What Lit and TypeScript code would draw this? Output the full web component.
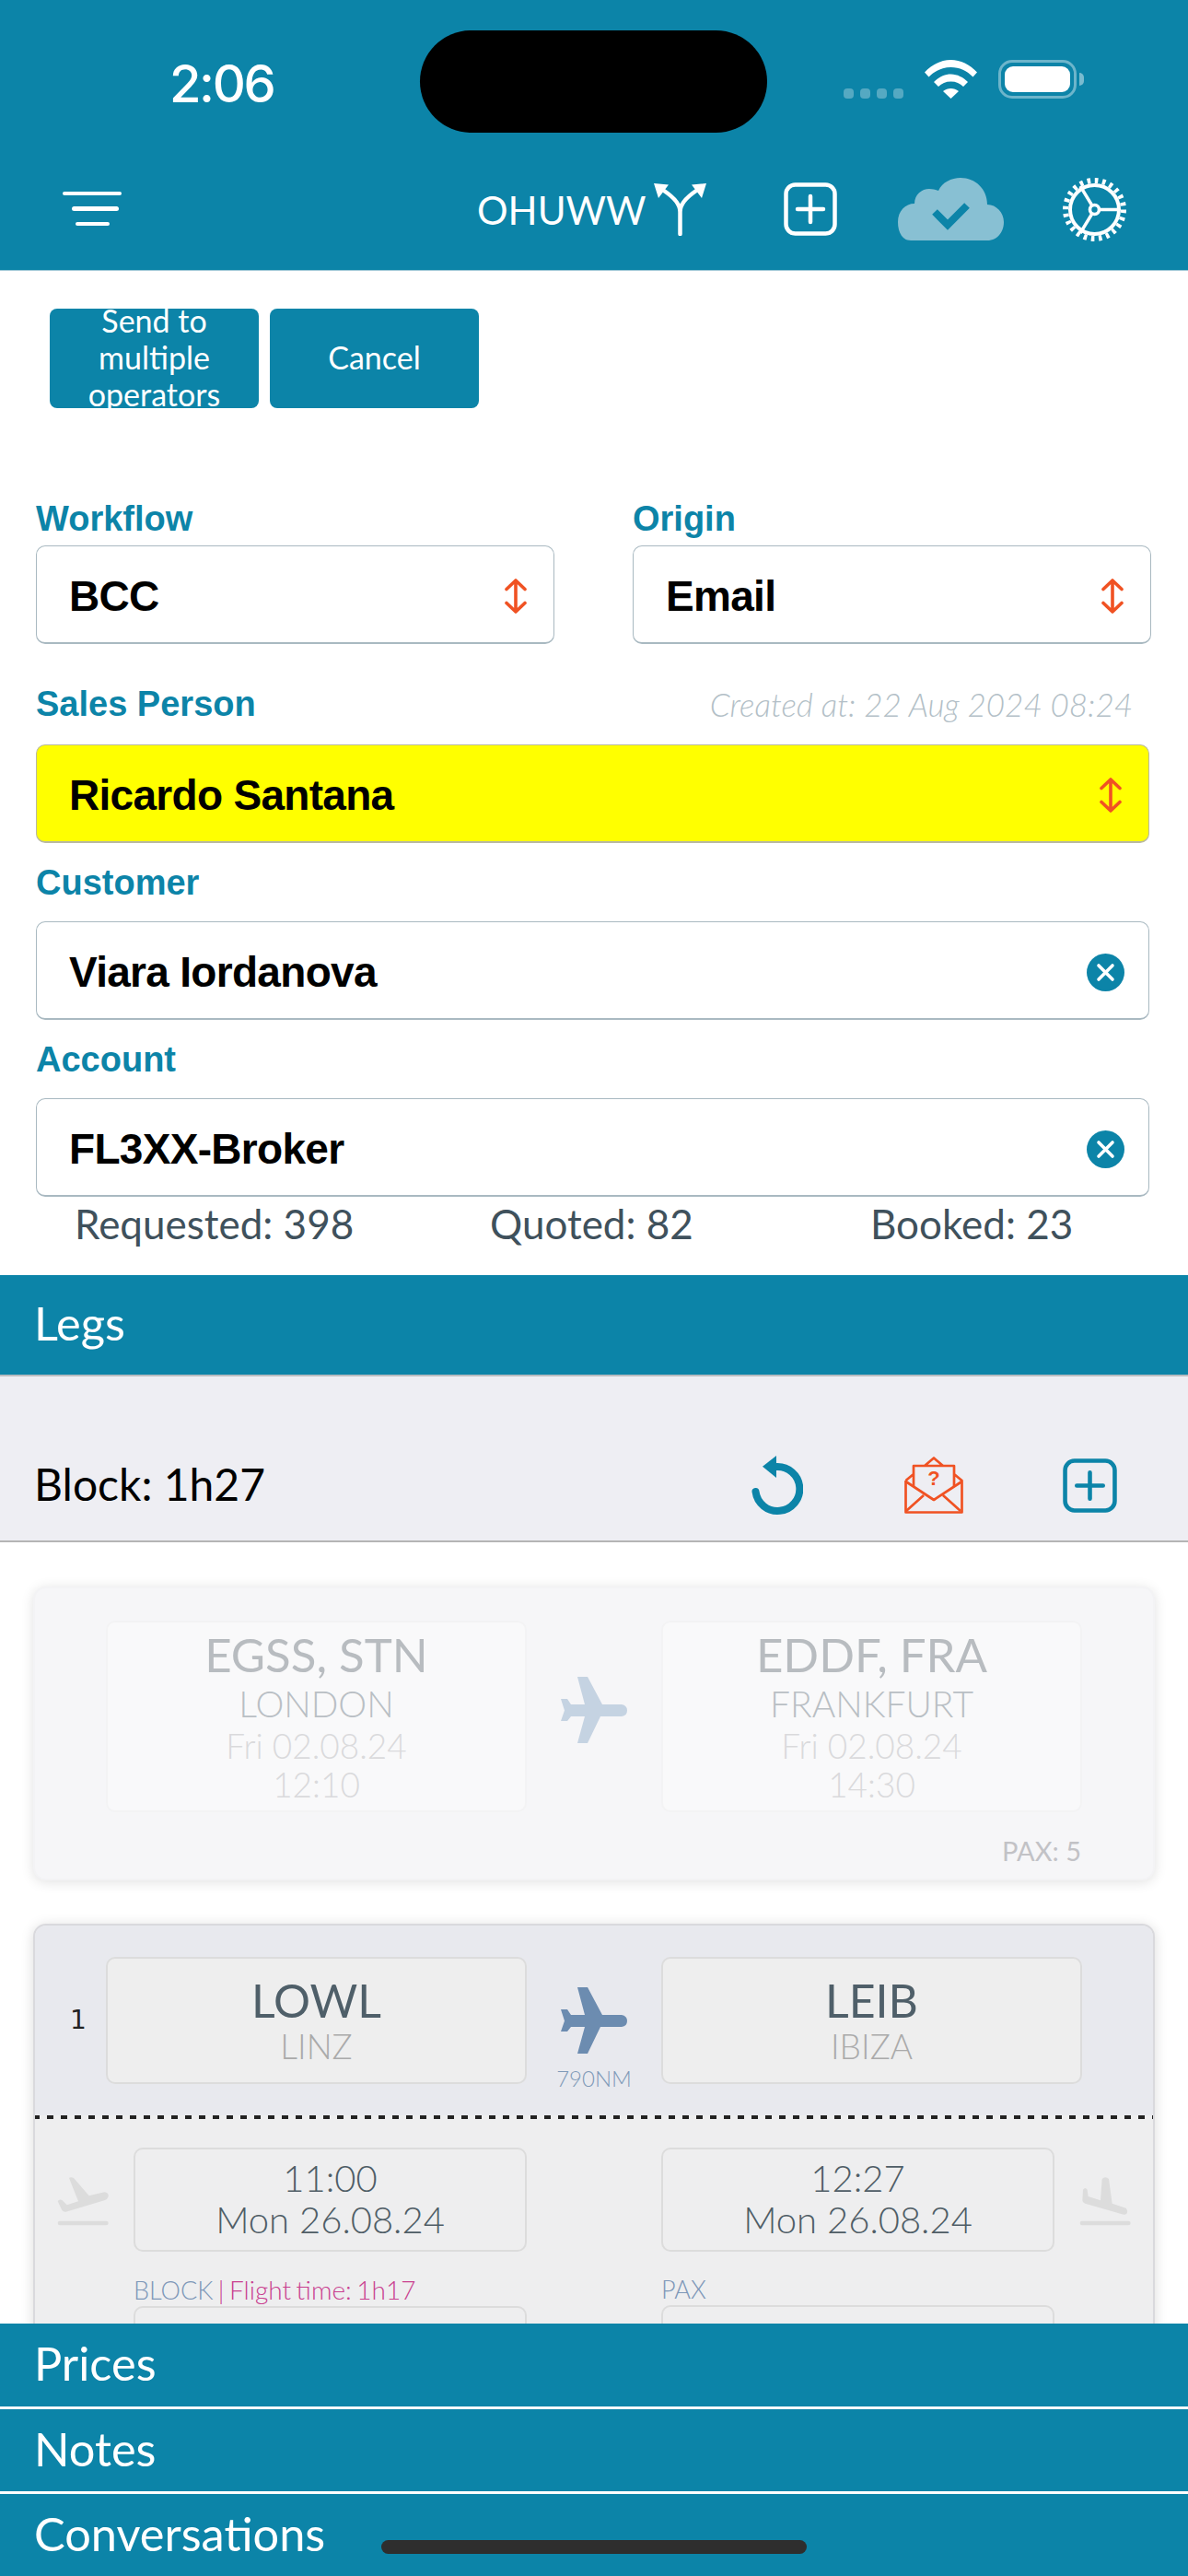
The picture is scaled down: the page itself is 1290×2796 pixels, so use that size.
import { LitElement, css, html, svg } from "lit";
import { customElement } from "lit/decorators.js";

const PLANE =
	"M18 0 L29 0 L45 30 L66 30 Q72 31 72 36.5 Q72 42 66 43 L43 43 L29 72 L18 72 L26 43 L11 43 L7 48 L0 48 L4 36.5 L0 24 L7 24 L11 30 L26 30 Z";

const plane = () => html`<svg class="plane" viewBox="0 0 72 72"><path d=${PLANE} /></svg>`;

const plusBox = () => html`
	<svg class="plus" viewBox="0 0 58 58" fill="none" stroke="currentColor">
		<rect x="2.5" y="2.5" width="53" height="53" rx="10" stroke-width="4.5" />
		<path d="M29 15v28M15 29h28" stroke-width="4.5" stroke-linecap="round" />
	</svg>
`;

const updown = html`
	<svg class="updown" viewBox="0 0 24 38" fill="none" stroke="#f05223" stroke-width="3.6" stroke-linecap="round" stroke-linejoin="round">
		<path d="M12 2v34M2 11.5 12 2l10 9.5M2 26.5 12 36l10-9.5" />
	</svg>
`;

const clear = html`
	<svg class="clear" viewBox="0 0 41 41">
		<circle cx="20.5" cy="20.5" r="20.5" fill="#0c84a8" />
		<path d="M13 13l15 15M28 13 13 28" stroke="#fff" stroke-width="3.6" stroke-linecap="round" />
	</svg>
`;

const gear = html`
	<svg class="gear" viewBox="0 0 69 69" fill="none" stroke="#fff">
		<circle cx="34.5" cy="34.5" r="26.5" stroke-width="4" />
		<circle cx="34.5" cy="34.5" r="31.5" stroke-width="6" stroke-dasharray="3.6 4.65" />
		<circle cx="34.5" cy="34.5" r="5" stroke-width="3.6" />
		<path d="M40 34.5H61M31.5 29.5 19 9M31.5 39.5 19 60" stroke-width="3.4" />
	</svg>
`;

const ground = svg`<rect x="38" y="182" width="165" height="14" rx="7" />`;

const takeoff = html`
	<svg class="ground" viewBox="0 0 240 240">
		<path d="M75 42Q80 37 90 42L140 100 190 88Q205 90 203 103 200 112 190 115L65 152Q58 154 52 147L38 118Q42 110 52 114L68 130 105 118Z" />
		${ground}
	</svg>
`;

const landing = html`
	<svg class="ground right" viewBox="0 0 240 240">
		<path d="M110 45Q120 35 132 45L143 125 188 140Q196 150 190 158 185 163 175 160L55 125Q46 122 46 115L48 80Q55 70 62 80L65 102 105 115Z" />
		${ground}
	</svg>
`;

@customElement("app-root")
export class AppRoot extends LitElement {
	static styles = css`
		:host {
			display: flex;
			flex-direction: column;
			position: relative;
			width: 1290px;
			height: 2796px;
			overflow: hidden;
			background: #fff;
			font-family: "Lato", "Open Sans", sans-serif;
			color: #000;
		}

		/* header */
		.header {
			flex: none;
			height: 294px;
			box-sizing: border-box;
			background: #0c84a8;
			border-bottom: 1px solid #9fc8d6;
			color: #fff;
		}
		.status {
			display: grid;
			grid-template-columns: 456px 377px 1fr;
			height: 160px;
			padding-top: 33px;
			box-sizing: border-box;
		}
		.time {
			padding: 30px 0 0 184px;
			font: 500 56px/56px "Inter", sans-serif;
			letter-spacing: -2.4px;
		}
		.island {
			height: 111px;
			border-radius: 56px;
			background: #000;
		}
		.status-right {
			display: flex;
			align-items: flex-end;
			height: 74px;
			padding-left: 83px;
		}
		.dots {
			display: flex;
			gap: 7px;
			margin-right: 23px;
		}
		.dots i {
			width: 11px;
			height: 11px;
			border-radius: 4px;
			background: rgba(255, 255, 255, 0.3);
		}
		.wifi {
			width: 57px;
			height: 42px;
			margin-right: 23px;
		}
		.battery {
			width: 85px;
			height: 42px;
			box-sizing: border-box;
			padding: 4px;
			border: 3px solid rgba(255, 255, 255, 0.4);
			border-radius: 15px;
		}
		.battery i {
			display: block;
			height: 100%;
			border-radius: 9px;
			background: #fff;
		}
		.nub {
			width: 5px;
			height: 14px;
			margin: 0 0 14px 3px;
			border-radius: 0 7px 7px 0;
			background: rgba(255, 255, 255, 0.45);
		}
		.nav {
			display: flex;
			align-items: center;
			height: 133px;
			padding: 0 67px 0 68px;
			box-sizing: border-box;
		}
		.burger {
			display: flex;
			flex-direction: column;
			align-items: center;
			gap: 12px;
			width: 64px;
			margin-right: 386px;
		}
		.burger i {
			height: 4.5px;
			border-radius: 3px;
			background: #fff;
		}
		.burger i:nth-child(1) {
			width: 64px;
		}
		.burger i:nth-child(2) {
			width: 51px;
			margin-left: 6px;
		}
		.burger i:nth-child(3) {
			width: 37px;
		}
		.tail {
			width: 180px;
			margin-top: 2px;
			font-size: 42px;
			line-height: 50px;
			white-space: nowrap;
		}
		.fork {
			width: 57px;
			height: 57px;
			margin: 1px 0 0 12px;
		}
		.nav .plus {
			width: 58px;
			height: 58px;
			margin: 1px 0 0 84px;
		}
		.cloud {
			width: 115px;
			height: 68px;
			margin: 1px 0 0 66px;
		}
		.gear {
			width: 69px;
			height: 69px;
			margin: 1px 0 0 64px;
		}

		/* form */
		.form {
			flex: none;
			padding: 41px 42px 0 39px;
		}
		.actions {
			display: flex;
			gap: 12px;
			margin: 0 0 91px 15px;
		}
		.btn {
			display: flex;
			align-items: center;
			justify-content: center;
			width: 227px;
			height: 108px;
			box-sizing: border-box;
			padding-bottom: 2px;
			overflow: hidden;
			border-radius: 8px;
			background: #0c84a8;
			color: #fff;
			font-size: 34px;
			line-height: 40px;
			text-align: center;
		}
		.pair {
			display: grid;
			grid-template-columns: 563px 563px;
			gap: 85px;
		}
		.label {
			display: flex;
			align-items: center;
			justify-content: space-between;
			height: 85px;
			color: #0c84a8;
			font: 700 38px/44px "Liberation Sans", sans-serif;
		}
		.pair .label {
			height: 58px;
		}
		.label.sales {
			height: 88px;
			margin-top: 21px;
		}
		.created {
			padding-right: 18px;
			color: #b3bfc7;
			font: italic 300 35px/40px "Lato", sans-serif;
		}
		.box {
			display: flex;
			align-items: center;
			justify-content: space-between;
			height: 107px;
			box-sizing: border-box;
			padding: 4px 29px 0 35px;
			border: 1.5px solid #a9b9c1;
			border-bottom-width: 2px;
			border-radius: 10px;
			font: 700 46px/56px "Liberation Sans", sans-serif;
			letter-spacing: -0.7px;
		}
		.box.hot {
			background: #ff0;
			border-color: #b9b9a0;
		}
		.updown {
			width: 24px;
			height: 38px;
			flex: none;
		}
		.clear {
			width: 41px;
			height: 41px;
			flex: none;
			margin-right: -3px;
		}
		.totals {
			display: grid;
			grid-template-columns: 451px 413px auto;
			height: 85px;
			padding: 7px 0 0 42px;
			box-sizing: border-box;
			color: #3f515c;
			font-size: 44px;
			line-height: 44px;
		}

		/* section bars */
		.bar {
			flex: none;
			display: flex;
			align-items: center;
			box-sizing: border-box;
			padding: 0 0 4px 37px;
			background: #0c84a8;
			color: #fff;
			font-size: 50.5px;
			line-height: 56px;
		}
		.legs {
			height: 110px;
			border-bottom: 2px solid #b9bcc0;
		}
		.toolbar {
			flex: none;
			display: flex;
			align-items: center;
			height: 180px;
			box-sizing: border-box;
			padding: 86px 77px 28px 37px;
			border-bottom: 2px solid #b5b5b5;
			background: #eeeef3;
			font-size: 48px;
		}
		.toolbar span {
			margin-top: -4px;
		}
		.undo {
			width: 56px;
			height: 64px;
			margin-left: auto;
		}
		.mail {
			width: 64px;
			height: 62px;
			margin-left: 110px;
		}
		.toolbar .plus {
			width: 59px;
			height: 59px;
			margin-left: 108px;
			color: #0c84a8;
		}

		/* legs */
		.list {
			flex: 1;
			min-height: 0;
			overflow: hidden;
			padding: 48px 36px 0;
		}
		.card {
			border: 2px solid transparent;
			border-radius: 14px;
		}
		.past {
			height: 319px;
			box-sizing: border-box;
			margin-bottom: 47px;
			padding-top: 35px;
			background: #f6f6f8;
			border-color: #f3f3f5;
			box-shadow: 0 2px 14px rgba(0, 0, 0, 0.12);
		}
		.route {
			display: grid;
			grid-template-columns: 77px 457px 146px 457px 77px;
		}
		.cell {
			grid-column: 2;
			box-sizing: border-box;
			padding-top: 9px;
			border: 2px solid #f3f3f4;
			border-radius: 10px;
			background: #f9f9fa;
			text-align: center;
		}
		.cell.to {
			grid-column: 4;
		}
		.past .cell {
			height: 208px;
		}
		.code {
			color: #b8bcc0;
			font-size: 51px;
			line-height: 52px;
		}
		.city {
			margin-top: 2px;
			color: #b9bfc4;
			font-size: 39px;
			font-weight: 300;
			line-height: 50px;
		}
		.when {
			color: #dadadc;
			font-size: 37px;
			font-weight: 300;
			line-height: 42px;
		}
		.plane {
			display: block;
			width: 72px;
			height: 72px;
			fill: #c5d3e2;
		}
		.route .plane {
			grid-column: 3;
			grid-row: 1;
			justify-self: center;
			margin-top: 61px;
		}
		.pax {
			margin-top: 28px;
			padding-right: 78px;
			color: #c2c2c6;
			font-size: 29px;
			line-height: 28px;
			text-align: right;
		}
		.current {
			height: 600px;
			overflow: hidden;
			box-shadow: 0 2px 14px rgba(0, 0, 0, 0.15);
			border-color: #d9d9dd;
			background: #eeeeef;
		}
		.current .top {
			height: 206px;
			box-sizing: border-box;
			padding-top: 34px;
			background: #e8e9ee;
		}
		.current .cell {
			height: 138px;
			padding-top: 19px;
			border-color: #dcdcdc;
			background: #eee;
		}
		.current .code {
			color: #4f5f69;
			font-size: 50px;
		}
		.current .city {
			margin: 0;
			color: #aaa;
			font-size: 37px;
			line-height: 48px;
		}
		.index {
			padding: 55px 0 0 38px;
			color: #222;
			font: 28px/28px "DejaVu Sans", sans-serif;
		}
		.middle {
			grid-column: 3;
			display: flex;
			flex-direction: column;
			align-items: center;
			padding-top: 33px;
		}
		.route .middle .plane {
			fill: #6c8cb0;
			margin: 0;
		}
		.dist {
			margin-top: 12px;
			color: #7f9ab8;
			font-size: 24px;
			font-weight: 300;
			line-height: 30px;
		}
		.dotted {
			height: 4px;
			margin: 0 -2px;
			background: repeating-linear-gradient(90deg, #222 0 7px, transparent 7px 15px);
		}
		.times {
			display: grid;
			grid-template-columns: 107px 427px 146px 427px 107px;
			padding-top: 31px;
		}
		.times > div {
			grid-column: 2;
		}
		.times > div.to {
			grid-column: 4;
		}
		.slot {
			height: 113px;
			box-sizing: border-box;
			padding-top: 9px;
			border: 2px solid #dcdcdc;
			border-radius: 10px;
			color: #4f5d66;
			font-size: 40px;
			font-weight: 300;
			line-height: 45px;
			text-align: center;
		}
		.ground {
			grid-row: 1;
			grid-column: 1;
			width: 80px;
			height: 80px;
			margin: 19px 0 0 12px;
			fill: #dcdcdc;
		}
		.ground.right {
			grid-column: 5;
			margin-left: 15px;
		}
		.hint {
			margin-top: 26px;
			color: #7d97b8;
			font-size: 27px;
			font-weight: 300;
			line-height: 30px;
			word-spacing: -2px;
		}
		.hint b {
			color: #c9408f;
			font-size: 28px;
			font-weight: 300;
		}
		.hint + .slot {
			margin-top: 2px;
		}

		/* footer */
		.footer {
			flex: none;
			background: #fff;
		}
		.foot {
			height: 89px;
		}
		.foot + .foot {
			margin-top: 3px;
		}
		.foot:first-child {
			height: 90px;
		}
		.home {
			position: absolute;
			left: 414px;
			top: 2757px;
			width: 462px;
			height: 15px;
			border-radius: 8px;
			background: #2e2e2e;
		}
	`;

	render() {
		return html`
			<div class="header">
				<div class="status">
					<div class="time">2:06</div>
					<div class="island"></div>
					<div class="status-right">
						<div class="dots"><i></i><i></i><i></i><i></i></div>
						<svg class="wifi" viewBox="0 0 57 42" fill="#fff">
							<path d="M0 13.5C8 5 18 0 28.5 0S49 5 57 13.5L52.5 18.5C46 12 38 8 28.5 8S11 12 4.5 18.5Z" />
							<path d="M10 24C15 19 21.5 15.5 28.5 15.5S42 19 47 24L42 29C38.5 25.5 34 23.5 28.5 23.5S18.5 25.5 15 29Z" />
							<path d="M20 34C22.5 32 25.5 31 28.5 31S34.5 32 37 34L28.5 42Z" />
						</svg>
						<div class="battery"><i></i></div>
						<div class="nub"></div>
					</div>
				</div>
				<div class="nav">
					<div class="burger"><i></i><i></i><i></i></div>
					<div class="tail">OHUWW</div>
					<svg class="fork" viewBox="0 0 57 57">
						<path d="M28.5 55V31C28.5 22 20 14 11 8M28.5 31C28.5 22 37 14 46 8" fill="none" stroke="#fff" stroke-width="4.5" stroke-linecap="round" />
						<path d="M0 0 16 1.5 5 16ZM57 0 41 1.5 52 16Z" fill="#fff" />
					</svg>
					${plusBox()}
					<svg class="cloud" viewBox="0 0 115 68">
						<path d="M14 68C4 68 0 58 0 48 0 36 8 28 18 28 18 18 26 12 34 12 38 12 41 13 44 14 48 5 58 0 68 0 84 0 97 12 97 29 107 29 115 38 115 48 115 60 107 68 97 68Z" fill="#88c0d3" />
						<path d="M40 37 54 51 75 30" fill="none" stroke="#0c84a8" stroke-width="8" />
					</svg>
					${gear}
				</div>
			</div>

			<div class="form">
				<div class="actions">
					<div class="btn">Send to multiple operators</div>
					<div class="btn">Cancel</div>
				</div>
				<div class="pair">
					<div>
						<div class="label">Workflow</div>
						<div class="box">BCC ${updown}</div>
					</div>
					<div>
						<div class="label">Origin</div>
						<div class="box">Email ${updown}</div>
					</div>
				</div>
				<div class="label sales">
					<span>Sales Person</span>
					<span class="created">Created at: 22 Aug 2024 08:24</span>
				</div>
				<div class="box hot">Ricardo Santana ${updown}</div>
				<div class="label">Customer</div>
				<div class="box">Viara Iordanova ${clear}</div>
				<div class="label">Account</div>
				<div class="box">FL3XX-Broker ${clear}</div>
				<div class="totals">
					<span>Requested: 398</span>
					<span>Quoted: 82</span>
					<span>Booked: 23</span>
				</div>
			</div>

			<div class="bar legs">Legs</div>
			<div class="toolbar">
				<span>Block: 1h27</span>
				<svg class="undo" viewBox="0 0 56 64">
					<path d="M4.5 39A24 24 0 1 0 27 12" fill="none" stroke="#0c84a8" stroke-width="8" stroke-linecap="round" />
					<path d="M27 0 12 11.7 27 24Z" fill="#0c84a8" />
				</svg>
				<svg class="mail" viewBox="0 0 64 62" fill="none" stroke="#f05223" stroke-width="2.7" stroke-linejoin="round">
					<path d="M1.5 26V60.5H62.5V26L54 19M1.5 26 10 19M10 33V10H54V33M22 10 32 1.5 42 10" />
					<path d="M1.5 27 32 47 62.5 27M2 59 21 42M61 59 42 42" />
					<text x="32" y="31" text-anchor="middle" fill="#f05223" stroke="none" font-family="Liberation Sans" font-weight="700" font-size="22">?</text>
				</svg>
				${plusBox()}
			</div>

			<div class="list">
				<div class="card past">
					<div class="route">
						<div class="cell">
							<div class="code">EGSS, STN</div>
							<div class="city">LONDON</div>
							<div class="when">Fri 02.08.24</div>
							<div class="when">12:10</div>
						</div>
						${plane()}
						<div class="cell to">
							<div class="code">EDDF, FRA</div>
							<div class="city">FRANKFURT</div>
							<div class="when">Fri 02.08.24</div>
							<div class="when">14:30</div>
						</div>
					</div>
					<div class="pax">PAX: 5</div>
				</div>

				<div class="card current">
					<div class="top route">
						<div class="index">1</div>
						<div class="cell">
							<div class="code">LOWL</div>
							<div class="city">LINZ</div>
						</div>
						<div class="middle">
							${plane()}
							<div class="dist">790NM</div>
						</div>
						<div class="cell to">
							<div class="code">LEIB</div>
							<div class="city">IBIZA</div>
						</div>
					</div>
					<div class="dotted"></div>
					<div class="times">
						${takeoff}
						<div>
							<div class="slot">11:00<br />Mon 26.08.24</div>
							<div class="hint">BLOCK <b>| Flight time: 1h17</b></div>
							<div class="slot"></div>
						</div>
						<div class="to">
							<div class="slot">12:27<br />Mon 26.08.24</div>
							<div class="hint">PAX</div>
							<div class="slot"></div>
						</div>
						${landing}
					</div>
				</div>
			</div>

			<div class="footer">
				<div class="bar foot">Prices</div>
				<div class="bar foot">Notes</div>
				<div class="bar foot">Conversations</div>
			</div>
			<div class="home"></div>
		`;
	}
}

declare global {
	interface HTMLElementTagNameMap {
		"app-root": AppRoot;
	}
}
